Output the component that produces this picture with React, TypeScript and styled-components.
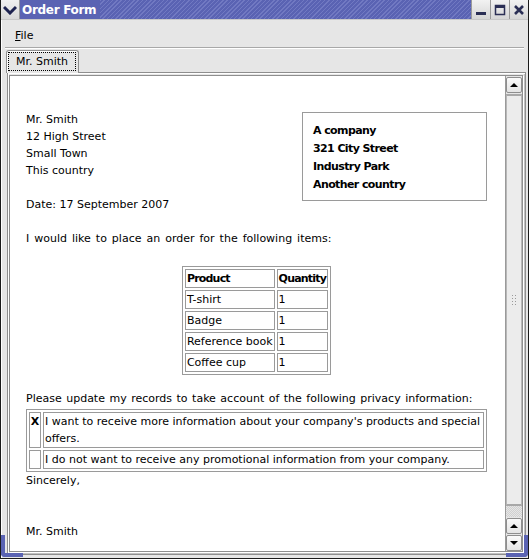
import React from 'react'
import styled, { createGlobalStyle } from 'styled-components'

const GlobalStyle = createGlobalStyle`
  * { box-sizing: border-box; }
  html, body { margin: 0; padding: 0; background: #e6e6e6; }
  body { font-family: 'DejaVu Sans', 'Liberation Sans', sans-serif; }
`

const items = [
  { product: 'T-shirt', quantity: 1 },
  { product: 'Badge', quantity: 1 },
  { product: 'Reference book', quantity: 1 },
  { product: 'Coffee cup', quantity: 1 },
]

const privacy = [
  { checked: true, text: "I want to receive more information about your company's products and special offers." },
  { checked: false, text: 'I do not want to receive any promotional information from your company.' },
]

const App: React.FC = () => {
  return (
    <>
      <GlobalStyle />
      <Window>
        <TitleBar>
          <MenuIcon>
            <svg width="14" height="10" viewBox="0 0 14 10">
              <path d="M1 2 L7 8 L13 2" fill="none" stroke="#1e2350" strokeWidth="3" />
            </svg>
          </MenuIcon>
          <Title>Order Form</Title>
          <Stripes />
          <TitleButton>
            <svg width="12" height="12" viewBox="0 0 12 12">
              <rect x="1" y="8" width="10" height="3" fill="#2b2f55" />
            </svg>
          </TitleButton>
          <TitleButton>
            <svg width="12" height="12" viewBox="0 0 12 12">
              <rect x="1.5" y="1.5" width="9" height="9" fill="none" stroke="#2b2f55" strokeWidth="1.5" />
              <rect x="1" y="1" width="10" height="3" fill="#2b2f55" />
            </svg>
          </TitleButton>
          <TitleButton>
            <svg width="12" height="12" viewBox="0 0 12 12">
              <path d="M2 2 L10 10 M10 2 L2 10" stroke="#2b2f55" strokeWidth="2.6" />
            </svg>
          </TitleButton>
        </TitleBar>

        <Body>
          <MenuBar>
            <MenuItem><u>F</u>ile</MenuItem>
          </MenuBar>
          <Separator />
          <TabBar>
            <Tab>
              <TabLabel>Mr. Smith</TabLabel>
            </Tab>
          </TabBar>
          <TabPane>
            <ScrollView>
              <Document>
                <CompanyBox>
                  A company<br />
                  321 City Street<br />
                  Industry Park<br />
                  Another country
                </CompanyBox>
                <Para>
                  Mr. Smith<br />
                  12 High Street<br />
                  Small Town<br />
                  This country
                </Para>
                <Para>Date: 17 September 2007</Para>
                <Para $wide>I would like to place an order for the following items:</Para>
                <OrderTable>
                  <thead>
                    <tr>
                      <HeadCell>Product</HeadCell>
                      <HeadCell>Quantity</HeadCell>
                    </tr>
                  </thead>
                  <tbody>
                    {items.map((item) => (
                      <tr key={item.product}>
                        <Cell>{item.product}</Cell>
                        <Cell>{item.quantity}</Cell>
                      </tr>
                    ))}
                  </tbody>
                </OrderTable>
                <TightPara>Please update my records to take account of the following privacy information:</TightPara>
                <PrivacyTable>
                  <tbody>
                    {privacy.map((p) => (
                      <tr key={p.text}>
                        <CheckCell>{p.checked ? 'X' : ''}</CheckCell>
                        <Cell>{p.text}</Cell>
                      </tr>
                    ))}
                  </tbody>
                </PrivacyTable>
                <Para>
                  Sincerely,<br />
                  <br />
                  <br />
                  Mr. Smith
                </Para>
              </Document>
              <ScrollBar>
                <ArrowButton $dir="up" />
                <Thumb>
                  <Grip />
                </Thumb>
                <Trough />
                <ArrowButton $dir="up" />
                <ArrowButton $dir="down" />
              </ScrollBar>
            </ScrollView>
          </TabPane>
        </Body>
        <ResizeCorner $side="left" />
        <ResizeCorner $side="right" />
      </Window>
    </>
  )
}

const Window = styled.div`
  position: relative;
  width: 529px;
  height: 559px;
  display: flex;
  flex-direction: column;
  background: #e6e6e6;
  border: 1px solid #1a1a1a;
  border-top: none;
  overflow: hidden;
`

const TitleBar = styled.div`
  height: 20px;
  display: flex;
  align-items: stretch;
  background: #5a63b3;
  border-bottom: 1px solid #c8c8c8;
  margin: 0 -1px;
`

const MenuIcon = styled.div`
  width: 20px;
  display: flex;
  align-items: center;
  justify-content: center;
  background: linear-gradient(#f0f0f0, #d8d8d8);
  border-right: 1px solid #9a9a9a;
`

const Title = styled.div`
  padding-left: 2px;
  color: #ffffff;
  font-weight: bold;
  font-size: 12px;
  letter-spacing: -0.3px;
  line-height: 21px;
  white-space: nowrap;
`

const Stripes = styled.div`
  flex: 1;
  margin-left: 4px;
  background: repeating-linear-gradient(
    -45deg,
    #5a63b3 0px,
    #5a63b3 2px,
    #7179c2 2px,
    #7179c2 3px
  );
`

const TitleButton = styled.div`
  width: 19px;
  display: flex;
  align-items: center;
  justify-content: center;
  background: linear-gradient(#f2f2f2, #d6d6d6);
  border-left: 1px solid #9a9a9a;
  &:last-child {
    margin-right: 1px;
  }
`

const Body = styled.div`
  flex: 1;
  display: flex;
  flex-direction: column;
  padding: 0 2px 3px 3px;
  border-left: 1px solid #ffffff;
  min-height: 0;
`

const MenuBar = styled.div`
  height: 27px;
  padding-top: 3px;
  display: flex;
  align-items: center;
  padding-left: 6px;
`

const MenuItem = styled.div`
  font-size: 11px;
  color: #000;
  padding: 0 4px;
  u {
    text-decoration: underline;
  }
`

const Separator = styled.div`
  height: 2px;
  border-top: 1px solid #a8a8a8;
  border-bottom: 1px solid #ffffff;
  margin-right: 2px;
`

const TabBar = styled.div`
  height: 23px;
  display: flex;
  align-items: flex-end;
  padding-left: 1px;
`

const Tab = styled.div`
  height: 23px;
  padding: 1px 2px 2px 1px;
  background: #e6e6e6;
  border: 1px solid #8e8e8e;
  border-bottom: none;
  border-radius: 3px 3px 0 0;
  box-shadow: inset 1px 1px 0 #ffffff;
  position: relative;
  top: 1px;
  z-index: 1;
`

const TabLabel = styled.div`
  height: 19px;
  padding: 0 7px;
  border: 1px dotted #000;
  font-size: 11px;
  line-height: 17px;
  color: #000;
`

const TabPane = styled.div`
  flex: 1;
  min-height: 0;
  margin-left: 2px;
  border: 1px solid #8e8e8e;
  box-shadow: inset 1px 1px 0 #ffffff, inset -1px -1px 0 #c0c0c0;
  padding: 2px 2px 2px 1px;
  display: flex;
`

const ScrollView = styled.div`
  flex: 1;
  display: flex;
  border: 1px solid #8e8e8e;
  box-shadow: 1px 1px 0 #ffffff;
  min-height: 0;
  background: #ffffff;
`

const Document = styled.div`
  flex: 1;
  padding: 35px 18px 0 16px;
  font-size: 11px;
  line-height: 17px;
  color: #000;
  overflow: hidden;
`

const Para = styled.p<{ $wide?: boolean }>`
  margin: 0 0 17px 0;
  ${(p) => (p.$wide ? 'word-spacing: 1.5px;' : '')}
`

const TightPara = styled.p`
  margin: 15px 0 2px 0;
  word-spacing: 1px;
`

const CompanyBox = styled.div`
  float: right;
  width: 185px;
  margin-top: 0.5px;
  padding: 9px 10px 6px 10px;
  border: 1px solid #9a9a9a;
  font-weight: bold;
  letter-spacing: -0.6px;
  line-height: 18px;
`

const OrderTable = styled.table`
  margin: 19px auto 0 auto;
  border: 1px solid #9a9a9a;
  border-spacing: 2px;
  font-size: 11px;
  line-height: 17px;
`

const Cell = styled.td`
  border: 1px solid #9a9a9a;
  padding: 0 1px;
  vertical-align: top;
  text-align: left;
`

const HeadCell = styled(Cell).attrs({ as: 'th' })`
  font-weight: bold;
  letter-spacing: -0.8px;
`

const PrivacyTable = styled.table`
  width: 100%;
  border: 1px solid #9a9a9a;
  border-spacing: 2px;
  font-size: 11px;
  line-height: 17px;
`

const CheckCell = styled(Cell)`
  width: 12px;
  padding: 0;
  text-align: center;
  font-weight: bold;
`

const ScrollBar = styled.div`
  width: 17px;
  display: flex;
  flex-direction: column;
  background: #e6e6e6;
  border-left: 1px solid #9a9a9a;
`

const ArrowButton = styled.div<{ $dir: 'up' | 'down' }>`
  height: 16px;
  flex-shrink: 0;
  margin: 1px 0 0 0;
  border: 1px solid #8e8e8e;
  border-radius: 2px;
  background: linear-gradient(#fafafa, #e4e4e4);
  display: flex;
  align-items: center;
  justify-content: center;
  &::after {
    content: '';
    width: 0;
    height: 0;
    border-left: 4px solid transparent;
    border-right: 4px solid transparent;
    ${(p) => (p.$dir === 'up' ? 'border-bottom: 4px solid #000;' : 'border-top: 4px solid #000;')}
  }
`

const Thumb = styled.div`
  flex: 1;
  margin-top: 1px;
  border-top: 2px solid #a8a8a8;
  border-bottom: 2px solid #a8a8a8;
  border-left: 1px solid #b8b8b8;
  border-right: 1px solid #b8b8b8;
  background: #ececec;
  display: flex;
  align-items: center;
  justify-content: center;
`

const Grip = styled.div`
  width: 6px;
  height: 12px;
  background-image: radial-gradient(circle, #9a9a9a 0.8px, transparent 1px);
  background-size: 3px 3px;
`

const Trough = styled.div`
  height: 11px;
  flex-shrink: 0;
  background-color: #e6e6e6;
  background-image:
    linear-gradient(45deg, #d0d0d0 25%, transparent 25%, transparent 75%, #d0d0d0 75%),
    linear-gradient(45deg, #d0d0d0 25%, transparent 25%, transparent 75%, #d0d0d0 75%);
  background-size: 2px 2px;
  background-position: 0 0, 1px 1px;
`

const ResizeCorner = styled.div<{ $side: 'left' | 'right' }>`
  position: absolute;
  bottom: 1px;
  ${(p) => (p.$side === 'left' ? 'left: 0;' : 'right: 0;')}
  width: 22px;
  height: 22px;
  ${(p) =>
    p.$side === 'left'
      ? 'border-left: 4px solid #5a63b3; border-bottom-left-radius: 4px;'
      : 'border-right: 4px solid #5a63b3; border-bottom-right-radius: 4px;'}
  border-bottom: 4px solid #5a63b3;
  pointer-events: none;
`

export default App
